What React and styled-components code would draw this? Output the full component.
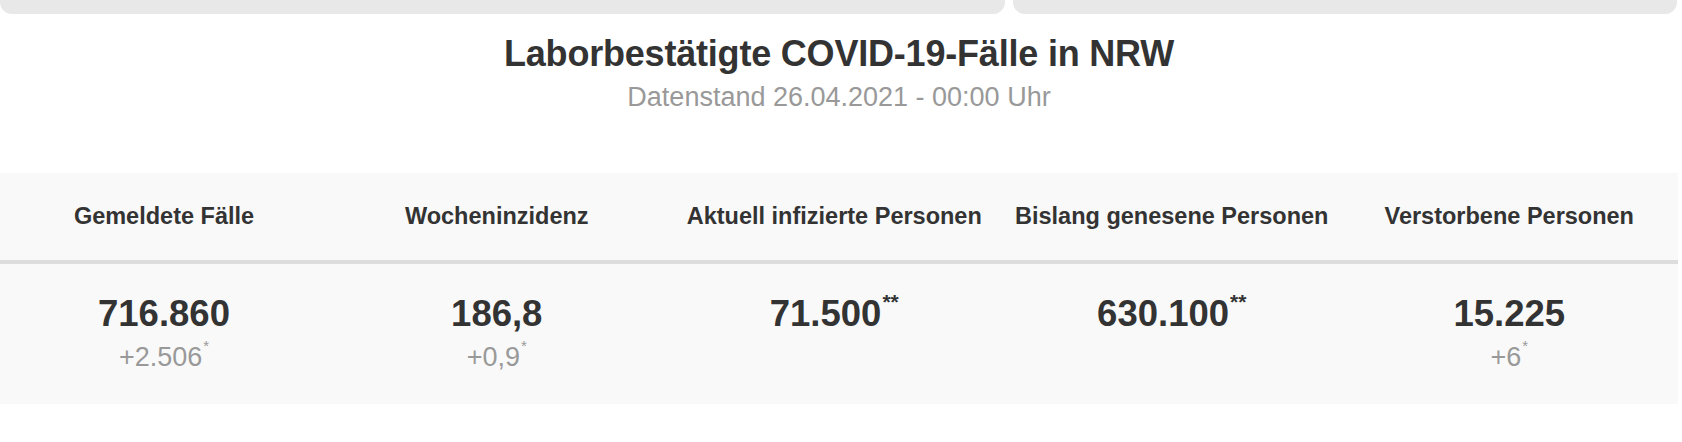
import React from "react";
import styled, { createGlobalStyle } from "styled-components";

const Global = createGlobalStyle`
  html, body { margin: 0; padding: 0; background: #ffffff; }
  body { font-family: "Liberation Sans", Arial, Helvetica, sans-serif; color: #333; }
`;

const Page = styled.div`
  width: 1678px;
  display: flex;
  flex-direction: column;
`;

const Tabs = styled.div`
  display: flex;
  gap: 8px;
  height: 14px;
`;

const Tab = styled.div`
  flex: ${(p) => (p.$grow ? "1" : "0 0 auto")};
  width: ${(p) => (p.$width ? `${p.$width}px` : "auto")};
  margin-right: ${(p) => (p.$last ? "1px" : "0")};
  background: #e8e8e8;
  border-radius: 0 0 12px 12px;
`;

const Heading = styled.header`
  display: flex;
  flex-direction: column;
  align-items: center;
  margin-top: 19px;
`;

const Title = styled.h1`
  margin: 0;
  font-size: 36px;
  line-height: 42px;
  font-weight: 700;
  color: #333;
  letter-spacing: -0.2px;
`;

const Subtitle = styled.div`
  margin-top: 7px;
  font-size: 27px;
  line-height: 30px;
  color: #999;
`;

const Table = styled.div`
  margin-top: 61px;
  background: #f9f9f9;
  display: grid;
  grid-template-columns: 328px repeat(4, 1fr);
`;

const HeadCell = styled.div`
  height: 87px;
  display: flex;
  align-items: center;
  justify-content: center;
  font-size: 23.5px;
  font-weight: 700;
  color: #333;
  border-bottom: 4px solid #dddddd;
  white-space: nowrap;
`;

const BodyCell = styled.div`
  padding: 30px 0 33px;
  display: flex;
  flex-direction: column;
  align-items: center;
`;

const Value = styled.div`
  font-size: 36.5px;
  line-height: 40px;
  font-weight: 700;
  color: #333;
  height: 40px;
`;

const Delta = styled.div`
  margin-top: 9px;
  font-size: 27px;
  line-height: 28px;
  height: 28px;
  color: #999;
`;

const Star = styled.sup`
  font-size: ${(p) => (p.$big ? "21px" : "15px")};
  line-height: 0;
  vertical-align: top;
  position: relative;
  top: ${(p) => (p.$big ? "8px" : "3px")};
  margin-left: 1px;
`;

const columns = [
  { label: "Gemeldete Fälle", value: "716.860", delta: "+2.506" },
  { label: "Wocheninzidenz", value: "186,8", delta: "+0,9" },
  { label: "Aktuell infizierte Personen", value: "71.500", star: true },
  { label: "Bislang genesene Personen", value: "630.100", star: true },
  { label: "Verstorbene Personen", value: "15.225", delta: "+6" },
];

export default function App() {
  return (
    <>
      <Global />
      <Page>
        <Tabs>
          <Tab $width={1005} />
          <Tab $grow $last />
        </Tabs>
        <Heading>
          <Title>Laborbestätigte COVID-19-Fälle in NRW</Title>
          <Subtitle>Datenstand 26.04.2021 - 00:00 Uhr</Subtitle>
        </Heading>
        <Table>
          {columns.map((c) => (
            <HeadCell key={c.label}>{c.label}</HeadCell>
          ))}
          {columns.map((c) => (
            <BodyCell key={c.label}>
              <Value>
                {c.value}
                {c.star && <Star $big>**</Star>}
              </Value>
              <Delta>
                {c.delta && (
                  <>
                    {c.delta}
                    <Star>*</Star>
                  </>
                )}
              </Delta>
            </BodyCell>
          ))}
        </Table>
      </Page>
    </>
  );
}
